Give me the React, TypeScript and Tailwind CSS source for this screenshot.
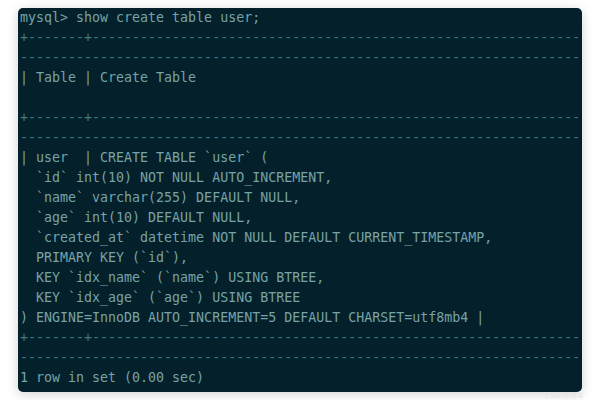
const full = "-".repeat(70);
const border = "+-------+" + "-".repeat(61);

const lines: { text: string; dim?: boolean }[] = [
  { text: "mysql> show create table user;" },
  { text: border, dim: true },
  { text: full, dim: true },
  { text: "| Table | Create Table" },
  { text: "" },
  { text: border, dim: true },
  { text: full, dim: true },
  { text: "| user  | CREATE TABLE `user` (" },
  { text: "  `id` int(10) NOT NULL AUTO_INCREMENT," },
  { text: "  `name` varchar(255) DEFAULT NULL," },
  { text: "  `age` int(10) DEFAULT NULL," },
  { text: "  `created_at` datetime NOT NULL DEFAULT CURRENT_TIMESTAMP," },
  { text: "  PRIMARY KEY (`id`)," },
  { text: "  KEY `idx_name` (`name`) USING BTREE," },
  { text: "  KEY `idx_age` (`age`) USING BTREE" },
  { text: ") ENGINE=InnoDB AUTO_INCREMENT=5 DEFAULT CHARSET=utf8mb4 |" },
  { text: border, dim: true },
  { text: full, dim: true },
  { text: "1 row in set (0.00 sec)" },
];

export default function App() {
  return (
    <main className="relative h-[400px] w-[600px] overflow-hidden bg-white pl-[18px] pt-[8px]">
      <div className="h-[384px] w-[564px] overflow-hidden rounded-[5px] bg-[#04202a] pl-[2px] shadow-[0_2px_12px_rgba(0,0,0,0.18)] font-['DejaVu_Sans_Mono',monospace] text-[13.3px]">
        {lines.map((l, i) => (
          <div
            key={i}
            className={
              "h-[20px] whitespace-pre leading-[20px] " +
              (l.dim ? "text-[#3f7880]" : "text-[#76a3a8]")
            }
          >
            {l.text}
          </div>
        ))}
      </div>
      <span className="absolute bottom-0 right-[16px] font-['Noto_Sans',sans-serif] text-[7px] leading-[8px] text-[#e4e4e4]">
        CSDN@博客
      </span>
    </main>
  );
}
